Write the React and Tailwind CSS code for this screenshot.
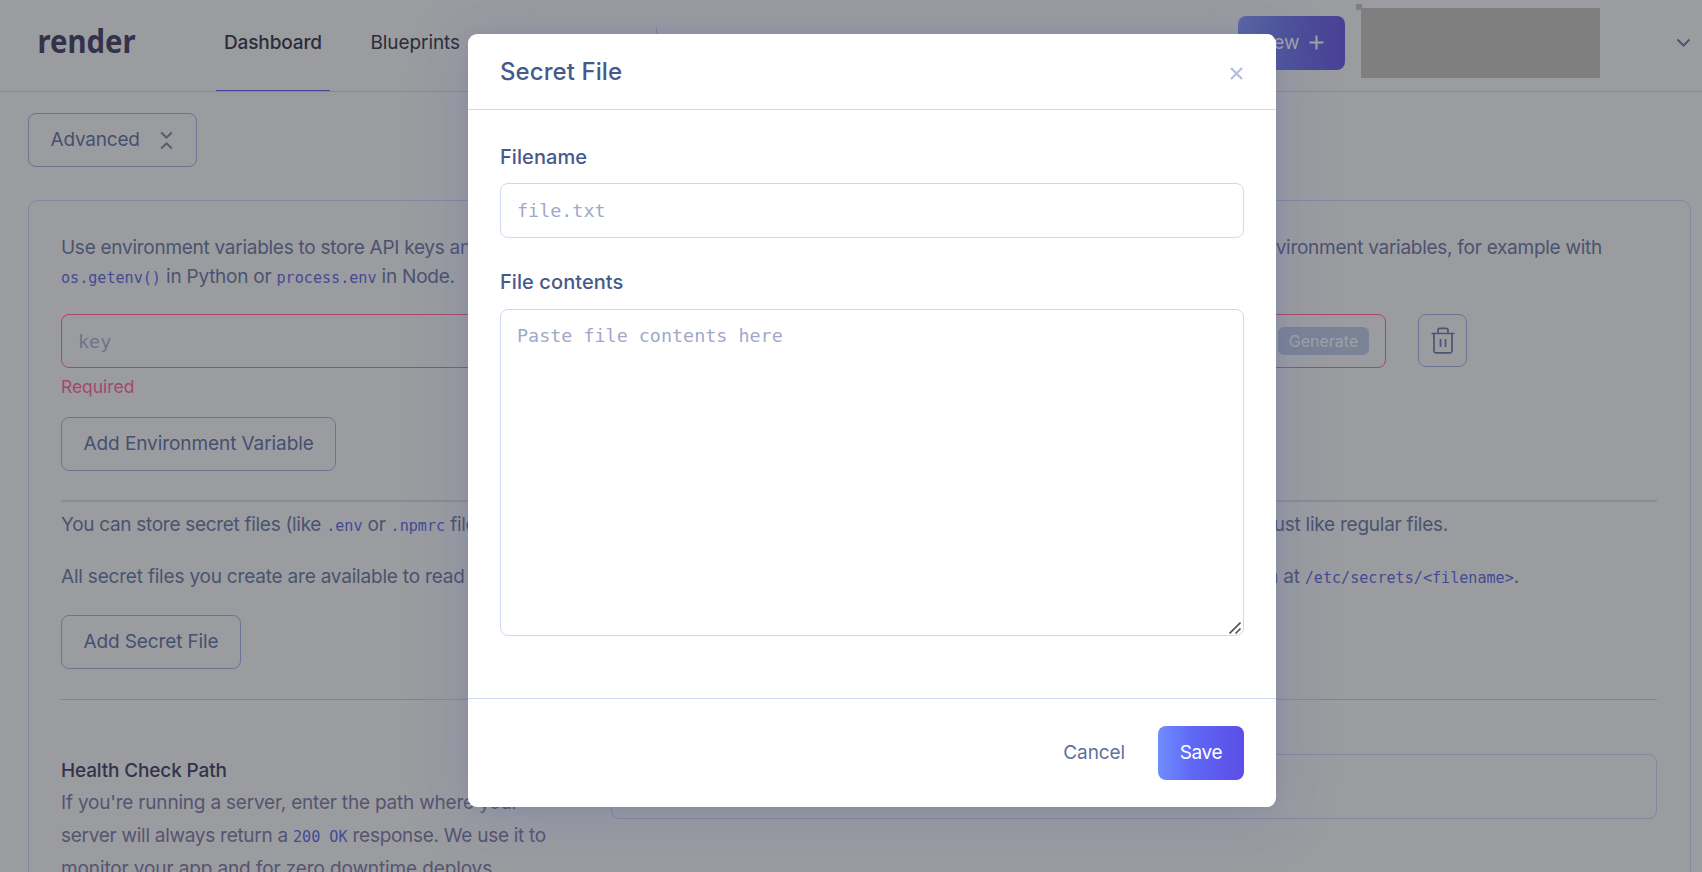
import React from 'react'

function Code({ children }) {
  return (
    <code className="font-['DejaVu_Sans_Mono',monospace] text-[15.1px] leading-none tracking-normal text-[#434a94]">
      {children}
    </code>
  )
}

function OutlineButton({ className, children }) {
  return (
    <button
      className={`flex h-[54px] items-center rounded-lg border border-[#6e7496] pl-[21.5px] text-[19px] whitespace-nowrap text-[#465070] ${className}`}
    >
      {children}
    </button>
  )
}

function Header() {
  return (
    <header className="flex h-[92px] shrink-0 border-b border-[#84879e]">
      <svg className="ml-9 h-[84px] w-[110px]" viewBox="0 0 110 84">
        <text
          x="1.5"
          y="52.5"
          textLength="98"
          lengthAdjust="spacingAndGlyphs"
          className="fill-[#33324a] font-['Noto_Sans',sans-serif] text-[33px] font-bold"
        >
          render
        </text>
      </svg>
      <nav className="ml-[70px] flex text-[19px] text-[#2c2d38]">
        <a className="flex h-[91px] w-[114px] justify-center border-b border-[#46429a] pt-[28px] leading-[30px] font-medium tracking-[-0.12px]">
          Dashboard
        </a>
        <a className="pt-[28px] pl-[40.5px] leading-[30px] tracking-[-0.08px]">Blueprints</a>
      </nav>
      <div className="mt-[27px] ml-[196px] h-8 w-px bg-[#84879e]" />
      <button className="mt-4 ml-auto flex h-[54px] w-[107px] items-center rounded-lg bg-linear-to-r from-[#5a66a4] via-[#4d509a] to-[#494095] pt-px pl-[21px] text-[19px] text-[#a2a3a8]">
        New
        <svg className="mb-0.5 ml-[9px]" width="15" height="15" viewBox="0 0 15 15" stroke="currentColor" strokeWidth="2">
          <path d="M7.5 .5v14M.5 7.5h14" />
        </svg>
      </button>
      <div className="relative mt-2 ml-4 h-[70px] w-[239px] bg-[#7f7f7f]">
        <div className="absolute -top-1 -left-[5px] size-1.5 bg-[#7f7f7f]" />
      </div>
      <svg
        className="mt-[38px] mr-[11px] ml-[76px]"
        width="15"
        height="10"
        viewBox="0 0 15 10"
        fill="none"
        stroke="#4c5673"
        strokeWidth="2"
      >
        <path d="M1.5 1.5l6 6 6-6" />
      </svg>
    </header>
  )
}

function EnvironmentCard() {
  return (
    <section className="mt-[33px] mr-[11px] ml-7 flex h-[900px] flex-col rounded-[10px] border border-[#84879e] pt-8 pr-[33px] pl-8 text-[19px] tracking-[-0.24px] whitespace-nowrap text-[#4a536f]">
      <div className="leading-[29px]">
        <div className="flex w-[1541px] justify-between tracking-[-0.27px]">
          <span>Use environment variables to store API keys and other</span>
          <span>regular environment variables, for example with</span>
        </div>
        <div className="h-[29px]">
          <Code>os.getenv()</Code> in Python or <Code>process.env</Code> in Node.
        </div>
      </div>

      <div className="mt-[23px] flex">
        <div className="flex h-[54px] w-[1325px] items-center justify-between rounded-lg border border-[#a8486a] pr-4 pl-4">
          <span className="pt-px font-['DejaVu_Sans_Mono',monospace] text-[18.4px] tracking-normal text-[#6e7389]">key</span>
          <span className="flex h-7 w-[91px] items-center justify-center rounded-md bg-[#7b8396] text-base tracking-normal text-[#9fa1a8]">
            Generate
          </span>
        </div>
        <button className="ml-8 flex h-[53px] w-[49px] items-center justify-center rounded-lg border border-[#6e7496]">
          <svg className="mb-px" width="24" height="27" viewBox="0 0 24 27" fill="none" stroke="#4c5673" strokeWidth="1.7">
            <path d="M.5 6.5h23M3 6.5v17.5a1.8 1.8 0 0 0 1.8 1.8h14.4a1.8 1.8 0 0 0 1.8-1.8V6.5M7 6.5V3.3a2 2 0 0 1 2-2h6a2 2 0 0 1 2 2v3.2M9.5 12v8M14.5 12v8" />
          </svg>
        </button>
      </div>
      <div className="mt-[7px] text-[17.5px] leading-6 tracking-[-0.05px] text-[#a3486a]">Required</div>

      <OutlineButton className="mt-[18px] w-[275px] tracking-[-0.08px]">Add Environment Variable</OutlineButton>

      <div className="mt-[29px] h-0.5 shrink-0 bg-[#8b8c91]" />

      <div className="mt-2 flex w-[1387px] justify-between leading-[30px]">
        <span className="tracking-[-0.3px]">
          You can store secret files (like <Code>.env</Code> or <Code>.npmrc</Code> files)
        </span>
        <span>in your code just like regular files.</span>
      </div>
      <div className="mt-[22px] flex w-[1458px] justify-between leading-[30px]">
        <span className="tracking-[-0.2px]">All secret files you create are available to read</span>
        <span>
          You can access them at <Code>/etc/secrets/&lt;filename&gt;</Code>.
        </span>
      </div>

      <OutlineButton className="mt-[23px] w-[180px] tracking-[-0.12px]">Add Secret File</OutlineButton>

      <div className="mt-[30px] h-px shrink-0 bg-[#85868d]" />

      <div className="mt-[54px] flex justify-between">
        <div className="leading-[33px]">
          <h3 className="font-medium tracking-[-0.15px] text-[#33324a]">Health Check Path</h3>
          <p className="-mt-px tracking-[-0.2px] text-[#56546f]">
            If you're running a server, enter the path where your
            <br />
            <span className="tracking-[-0.28px]">
              server will always return a <Code>200 OK</Code> response. We use it to
            </span>
            <br />
            <span className="tracking-[-0.12px]">monitor your app and for zero downtime deploys.</span>
          </p>
        </div>
        <div className="h-[65px] w-[1046px] rounded-lg border border-[#84879e]" />
      </div>
    </section>
  )
}

function SecretFileModal() {
  return (
    <div className="absolute inset-0 flex items-start pt-[34px] pl-[468px]">
      <div
        role="dialog"
        className="flex h-[773px] w-[808px] flex-col rounded-[9px] bg-white text-[#465a8a] shadow-[0_6px_60px_rgba(84,94,175,0.25),0_0_12px_rgba(80,92,150,0.12)]"
      >
        <div className="flex h-[76px] items-center justify-between border-b border-[#cfdbec] pr-8 pl-8">
          <h2 className="text-2xl leading-9 font-medium tracking-[0.08px]">Secret File</h2>
          <svg className="mt-[3px] mr-px" width="13" height="13" viewBox="0 0 13 13" stroke="#b6bcd8" strokeWidth="2.2">
            <path d="M1 1l11 11M12 1L1 12" />
          </svg>
        </div>

        <div className="flex grow flex-col px-8 pt-[32px]">
          <label className="text-xl leading-[30px] font-medium tracking-[0.08px]">Filename</label>
          <div className="mt-[11px] flex h-[55px] items-center rounded-lg border border-[#cfdaf0] px-4 font-['DejaVu_Sans_Mono',monospace] text-[18.4px] text-[#a0a8c9]">
            file.txt
          </div>
          <label className="mt-[29px] text-xl leading-[30px] font-medium tracking-[0.08px]">File contents</label>
          <div className="relative mt-3 h-[327px] rounded-lg border border-[#cfdaf0] px-4 pt-3 font-['DejaVu_Sans_Mono',monospace] text-[18.4px] leading-[27px] text-[#a0a8c9]">
            Paste file contents here
            <svg
              className="absolute right-0.5 bottom-px"
              width="12"
              height="12"
              viewBox="0 0 12 12"
              stroke="#555"
              strokeWidth="1.6"
            >
              <path d="M.5 11.5l11-11M6.5 11.5l5-5" />
            </svg>
          </div>
        </div>

        <div className="flex h-[109px] items-start justify-end border-t border-[#cfdbf0] pt-[27px] pr-8">
          <button className="h-[54px] text-[19px] tracking-[-0.1px] text-[#5f6f9c]">Cancel</button>
          <button className="ml-[33px] h-[54px] w-[86px] rounded-lg bg-linear-to-r from-[#718cff] via-[#5f68f5] via-40% to-[#5b4de6] text-[19px] tracking-[-0.4px] text-white">
            Save
          </button>
        </div>
      </div>
    </div>
  )
}

export default function App() {
  return (
    <div className="relative flex h-[872px] w-[1702px] flex-col overflow-hidden bg-[#9b9ca0] font-[Inter,sans-serif]">
      <Header />
      <OutlineButton className="mt-[21px] ml-7 w-[169px] shrink-0 pt-px tracking-[-0.2px]">
        Advanced
        <svg
          className="ml-5"
          width="13"
          height="19"
          viewBox="0 0 13 19"
          fill="none"
          stroke="#595c68"
          strokeWidth="2"
        >
          <path d="M1.2 1.5l5.3 5.2 5.3-5.2M1.2 17.5l5.3-5.2 5.3 5.2" />
        </svg>
      </OutlineButton>
      <EnvironmentCard />
      <SecretFileModal />
    </div>
  )
}
